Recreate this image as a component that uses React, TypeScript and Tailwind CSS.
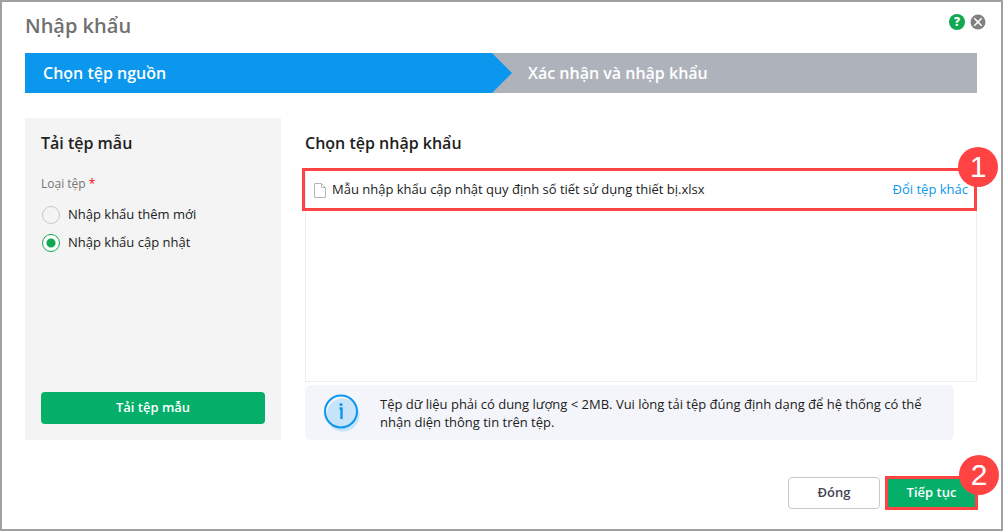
import { useState } from "react";

const fileTypes = [
  { value: "new", label: "Nhập khẩu thêm mới" },
  { value: "update", label: "Nhập khẩu cập nhật" },
];

function StepBadge({ value }: { value: number }) {
  return (
    <span className="absolute -top-6 -right-6 flex size-10 items-center justify-center rounded-full bg-[#ff4343] font-['Liberation_Sans',sans-serif] text-3xl font-normal text-white">
      {value}
    </span>
  );
}

function FileIcon() {
  return (
    <svg width="12" height="16" viewBox="0 0 12 16" fill="none" stroke="#b8b8b8" className="shrink-0" aria-hidden="true">
      <path d="M.5 1.5H7.5L11.5 5.5V15.5H.5Z" />
      <path d="M7.5 1.5V5.5H11.5" />
    </svg>
  );
}

function InfoIcon() {
  return (
    <svg width="38" height="40" viewBox="0 0 38 40" fill="none" className="shrink-0" aria-hidden="true">
      <circle cx="20" cy="22" r="16.5" fill="#c7e3f9" />
      <circle cx="18" cy="18.5" r="16" stroke="#0b97ed" strokeWidth="2" />
      <path d="M16.5 15.5H18.5V26" stroke="#0b97ed" strokeWidth="2.4" />
      <circle cx="18" cy="11.5" r="1.6" fill="#0b97ed" />
    </svg>
  );
}

export default function App() {
  const [fileType, setFileType] = useState("update");

  return (
    <div className="flex min-h-screen flex-col border-2 border-[#a0a0a0] bg-white pt-2 pr-6 pb-[19px] pl-[23px] font-['Open_Sans','Noto_Sans',sans-serif] text-[13px] text-[#212121]">
      <header className="flex h-[43px] items-start justify-between">
        <h1 className="pt-px text-xl leading-[30px] font-semibold text-[#707070]">Nhập khẩu</h1>
        <div className="-mr-[9px] flex gap-[5px] pt-1">
          <button aria-label="Trợ giúp" className="flex size-4 items-center justify-center rounded-full bg-[#10a952] text-xs leading-4 font-extrabold text-white">
            ?
          </button>
          <button aria-label="Đóng cửa sổ" className="size-4">
            <svg width="16" height="16" viewBox="0 0 16 16" aria-hidden="true">
              <circle cx="8" cy="8" r="7.5" fill="#808080" />
              <path d="M4.3 4.3L11.7 11.7M11.7 4.3L4.3 11.7" stroke="#fff" strokeWidth="1.5" />
            </svg>
          </button>
        </div>
      </header>

      <ol className="flex h-10 bg-[#aeb3bb] text-base font-semibold text-white">
        <li className="flex w-[487px] items-center bg-[#0b97ed] pl-[18px] [clip-path:polygon(0_0,calc(100%-20px)_0,100%_50%,calc(100%-20px)_100%,0_100%)]">
          Chọn tệp nguồn
        </li>
        <li className="flex items-center pl-4">Xác nhận và nhập khẩu</li>
      </ol>

      <main className="mt-[25px] flex min-h-[322px] gap-6">
        <section className="flex w-64 flex-col bg-[#f4f4f4] p-4">
          <h2 className="text-base leading-[18px] font-semibold">Tải tệp mẫu</h2>
          <fieldset className="mt-[22px]">
            <legend className="text-xs leading-5 text-[#757575]">
              Loại tệp <span className="text-[#ff0000]">*</span>
            </legend>
            <div className="mt-[7px] flex flex-col">
              {fileTypes.map((type) => (
                <label key={type.value} className="flex h-7 items-center gap-2">
                  <input
                    type="radio"
                    name="fileType"
                    value={type.value}
                    checked={fileType === type.value}
                    onChange={() => setFileType(type.value)}
                    className="ml-px size-[18px] appearance-none rounded-full border border-[#c8c8c8] checked:border-[#10a952] checked:bg-[radial-gradient(circle,#10a952_4px,white_5px)]"
                  />
                  {type.label}
                </label>
              ))}
            </div>
          </fieldset>
          <button className="mt-auto h-8 rounded bg-[#05af69] font-semibold text-white">Tải tệp mẫu</button>
        </section>

        <section className="flex min-w-0 flex-1 flex-col">
          <h2 className="pt-4 text-base leading-[18px] font-semibold">Chọn tệp nhập khẩu</h2>
          <div className="mt-4 flex-1 border border-t-0 border-[#eeeeee]">
            <div className="relative -mr-px -ml-1 flex h-[43px] items-center border-[3px] border-[#ff4343] pr-1.5 pl-[9px]">
              <FileIcon />
              <span className="ml-1.5">Mẫu nhập khẩu cập nhật quy định số tiết sử dụng thiết bị.xlsx</span>
              <a href="#" className="ml-auto text-[#0b97ed]">
                Đổi tệp khác
              </a>
              <StepBadge value={1} />
            </div>
          </div>
          <div className="mt-[3px] mr-[23px] flex h-[55px] items-center gap-[19px] rounded-md bg-[#f4f5fa] px-[18px]">
            <InfoIcon />
            <p className="leading-[18px]">
              Tệp dữ liệu phải có dung lượng &lt; 2MB. Vui lòng tải tệp đúng định dạng để hệ thống có thể nhận diện thông tin trên tệp.
            </p>
          </div>
        </section>
      </main>

      <footer className="mt-9 -mr-px flex items-center justify-end gap-[5px]">
        <button className="h-8 w-[92px] rounded border border-[#c8c8c8] font-semibold text-[#444455]">Đóng</button>
        <button className="relative h-[34px] w-[93px] border-[3px] border-[#ff4343] bg-[#05af69] font-semibold text-white">
          Tiếp tục
          <StepBadge value={2} />
        </button>
      </footer>
    </div>
  );
}
